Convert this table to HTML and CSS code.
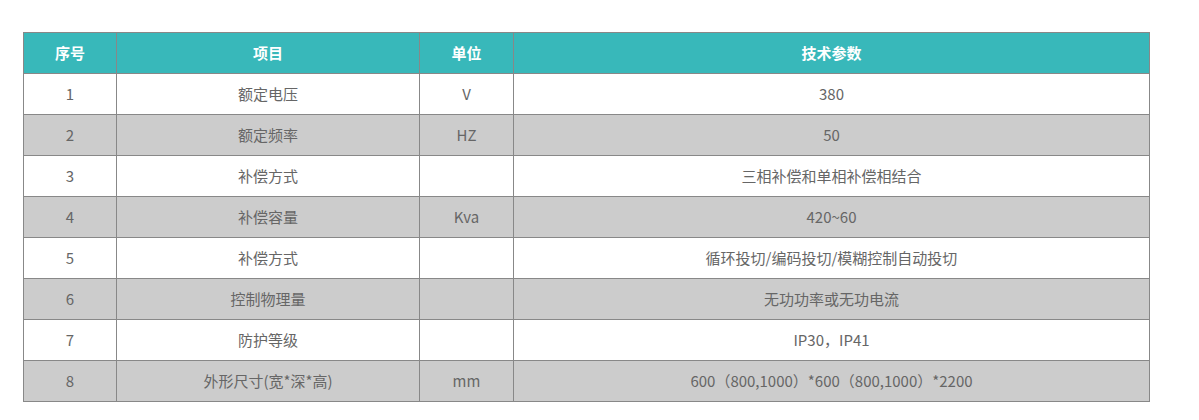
FILE: index.html
```html
<!DOCTYPE html>
<html lang="zh">
<head>
<meta charset="utf-8">
<link rel="stylesheet" href="styles.css">
</head>
<body>
<div class="wrap">
<table class="spec">
  <colgroup>
    <col class="c1"><col class="c2"><col class="c3"><col class="c4">
  </colgroup>
  <thead>
    <tr><th>序号</th><th>项目</th><th>单位</th><th>技术参数</th></tr>
  </thead>
  <tbody>
    <tr><td>1</td><td>额定电压</td><td>V</td><td>380</td></tr>
    <tr class="alt"><td>2</td><td>额定频率</td><td>HZ</td><td>50</td></tr>
    <tr><td>3</td><td>补偿方式</td><td></td><td>三相补偿和单相补偿相结合</td></tr>
    <tr class="alt"><td>4</td><td>补偿容量</td><td>Kva</td><td>420~60</td></tr>
    <tr><td>5</td><td>补偿方式</td><td></td><td>循环投切/编码投切/模糊控制自动投切</td></tr>
    <tr class="alt"><td>6</td><td>控制物理量</td><td></td><td>无功功率或无功电流</td></tr>
    <tr><td>7</td><td>防护等级</td><td></td><td>IP30，IP41</td></tr>
    <tr class="alt"><td>8</td><td>外形尺寸(宽*深*高)</td><td>mm</td><td>600（800,1000）*600（800,1000）*2200</td></tr>
  </tbody>
</table>
</div>
</body>
</html>
```
FILE: styles.css
```css
html, body {
  margin: 0;
  padding: 0;
  background: #fff;
}
.wrap {
  padding: 32px 0 0 23px;
}
.spec {
  border-collapse: collapse;
  width: 1127px;
  table-layout: fixed;
  font-family: "Noto Sans CJK SC", "Noto Sans", sans-serif;
  font-size: 15px;
  color: #666;
}
.c1 { width: 93px; }
.c2 { width: 303px; }
.c3 { width: 94px; }
.c4 { width: 636px; }
.spec th, .spec td {
  border: 1px solid #888;
  height: 40px;
  padding: 0;
  text-align: center;
  vertical-align: middle;
  box-sizing: border-box;
  line-height: 20px;
}
.spec th {
  background: #38b8ba;
  color: #fff;
  font-weight: bold;
}
.spec tbody tr { height: 41px; }
.spec thead tr { height: 41px; }
.spec tr.alt td {
  background: #ccc;
}
```
